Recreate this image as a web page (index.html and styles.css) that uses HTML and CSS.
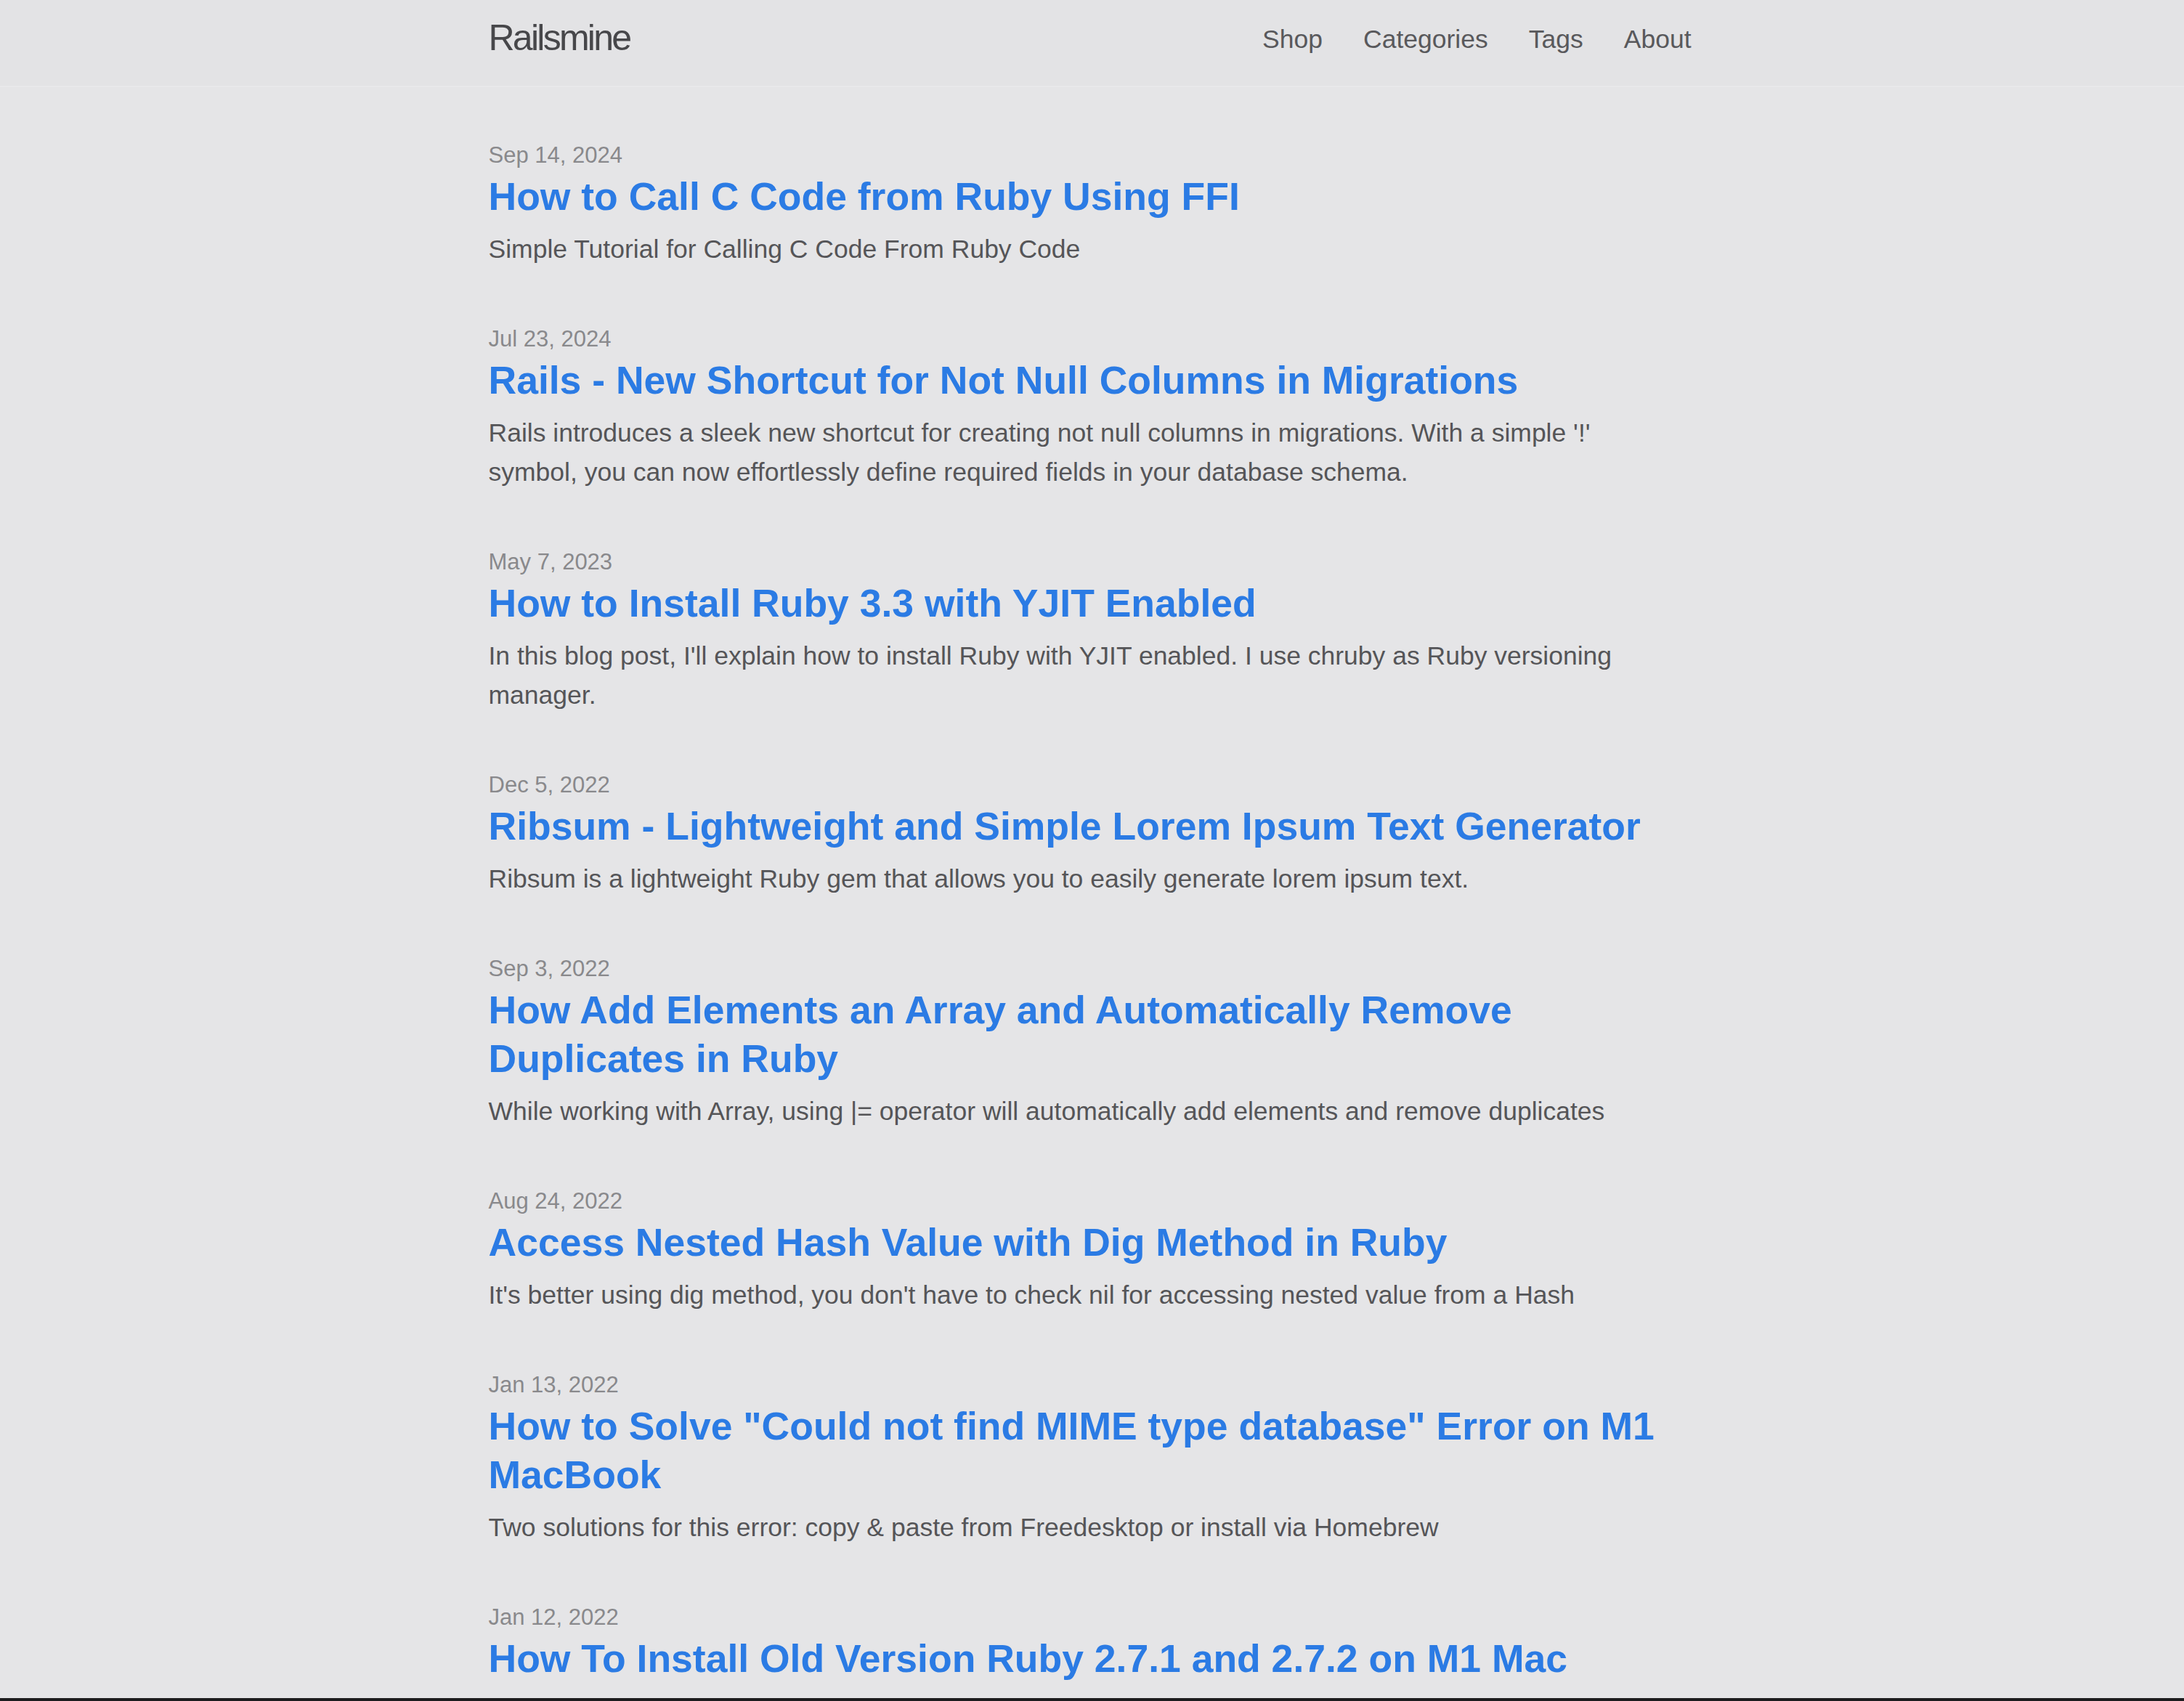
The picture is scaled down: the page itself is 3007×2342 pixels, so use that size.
FILE: index.html
```html
<!DOCTYPE html>
<html lang="en">
<head>
<meta charset="utf-8">
<title>Railsmine</title>
<link rel="stylesheet" href="styles.css">
</head>
<body>
<header class="site-header">
  <div class="wrap header-inner">
    <a class="logo" href="#">Railsmine</a>
    <nav class="nav">
      <a href="#">Shop</a>
      <a href="#">Categories</a>
      <a href="#">Tags</a>
      <a href="#">About</a>
    </nav>
  </div>
</header>
<main class="wrap posts">
  <article class="post">
    <div class="date">Sep 14, 2024</div>
    <h2 class="title"><a href="#">How to Call C Code from Ruby Using FFI</a></h2>
    <p class="desc">Simple Tutorial for Calling C Code From Ruby Code</p>
  </article>
  <article class="post">
    <div class="date">Jul 23, 2024</div>
    <h2 class="title"><a href="#">Rails - New Shortcut for Not Null Columns in Migrations</a></h2>
    <p class="desc">Rails introduces a sleek new shortcut for creating not null columns in migrations. With a simple '!' symbol, you can now effortlessly define required fields in your database schema.</p>
  </article>
  <article class="post">
    <div class="date">May 7, 2023</div>
    <h2 class="title"><a href="#">How to Install Ruby 3.3 with YJIT Enabled</a></h2>
    <p class="desc">In this blog post, I'll explain how to install Ruby with YJIT enabled. I use chruby as Ruby versioning manager.</p>
  </article>
  <article class="post">
    <div class="date">Dec 5, 2022</div>
    <h2 class="title"><a href="#">Ribsum - Lightweight and Simple Lorem Ipsum Text Generator</a></h2>
    <p class="desc">Ribsum is a lightweight Ruby gem that allows you to easily generate lorem ipsum text.</p>
  </article>
  <article class="post">
    <div class="date">Sep 3, 2022</div>
    <h2 class="title"><a href="#">How Add Elements an Array and Automatically Remove Duplicates in Ruby</a></h2>
    <p class="desc">While working with Array, using |= operator will automatically add elements and remove duplicates</p>
  </article>
  <article class="post">
    <div class="date">Aug 24, 2022</div>
    <h2 class="title"><a href="#">Access Nested Hash Value with Dig Method in Ruby</a></h2>
    <p class="desc">It's better using dig method, you don't have to check nil for accessing nested value from a Hash</p>
  </article>
  <article class="post">
    <div class="date">Jan 13, 2022</div>
    <h2 class="title"><a href="#">How to Solve "Could not find MIME type database" Error on M1 MacBook</a></h2>
    <p class="desc">Two solutions for this error: copy &amp; paste from Freedesktop or install via Homebrew</p>
  </article>
  <article class="post">
    <div class="date">Jan 12, 2022</div>
    <h2 class="title"><a href="#">How To Install Old Version Ruby 2.7.1 and 2.7.2 on M1 Mac</a></h2>
    <p class="desc">Step by step guide for installing old Ruby versions on Apple Silicon</p>
  </article>
</main>
<div class="bottom-bar"></div>
</body>
</html>
```
FILE: styles.css
```css
html, body {
  margin: 0;
  padding: 0;
}
body {
  background: #e5e5e7;
  font-family: "Liberation Sans", Arial, sans-serif;
  color: #555558;
}
a {
  text-decoration: none;
}
.wrap {
  width: 1656px;
  margin-left: calc(50% - 831px);
}
.site-header {
  background: #e3e3e5;
  border-bottom: 2px solid #e8e8ea;
  height: 120px;
  box-sizing: border-box;
}
.header-inner {
  display: flex;
  justify-content: space-between;
  align-items: flex-start;
  padding-top: 27px;
}
.logo {
  font-size: 50px;
  line-height: 50px;
  letter-spacing: -0.055em;
  color: #47474a;
}
.nav {
  display: flex;
  gap: 56px;
}
.nav a {
  font-size: 35.5px;
  line-height: 55px;
  color: #59595c;
}
.posts {
  padding-top: 70px;
}
.post {
  max-width: 1635px;
  margin-bottom: 73px;
}
.date {
  font-size: 31px;
  line-height: 47px;
  color: #89898c;
}
.title {
  margin: 0;
  font-size: 53.5px;
  line-height: 67px;
  font-weight: bold;
}
.title a {
  color: #2b7be4;
}
.desc {
  margin: 12px 0 0;
  font-size: 35.5px;
  line-height: 54px;
  color: #555558;
}
.bottom-bar {
  position: fixed;
  left: 0;
  right: 0;
  bottom: 0;
  height: 4px;
  background: #1c1c1e;
}
```
